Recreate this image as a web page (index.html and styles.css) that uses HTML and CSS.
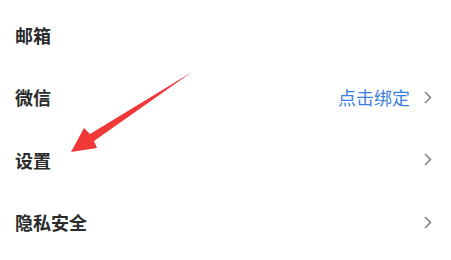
FILE: index.html
```html
<!DOCTYPE html>
<html lang="zh">
<head>
<meta charset="utf-8">
<link rel="stylesheet" href="styles.css">
</head>
<body>
<div class="page">
  <ul class="list">
    <li class="row"><span class="label">邮箱</span></li>
    <li class="row"><span class="label">微信</span><span class="right"><span class="action">点击绑定</span><svg class="chev" viewBox="0 0 8 13"><path d="M1 1 L6.5 6.5 L1 12" /></svg></span></li>
    <li class="row"><span class="label">设置</span><span class="right"><svg class="chev" viewBox="0 0 8 13"><path d="M1 1 L6.5 6.5 L1 12" /></svg></span></li>
    <li class="row"><span class="label">隐私安全</span><span class="right"><svg class="chev" viewBox="0 0 8 13"><path d="M1 1 L6.5 6.5 L1 12" /></svg></span></li>
  </ul>
  <svg class="arrow" viewBox="0 0 451 260" width="451" height="260">
    <polygon points="192,72 90,134 84,128 71,152 97,148 94,141" />
  </svg>
</div>
</body>
</html>
```
FILE: styles.css
```css
html, body {
  margin: 0;
  padding: 0;
  background: #ffffff;
}
.page {
  position: relative;
  width: 451px;
  height: 260px;
  overflow: hidden;
  font-family: "Noto Sans CJK SC", "Noto Sans", sans-serif;
}
.list {
  list-style: none;
  margin: 0;
  padding: 3.5px 19px 0 15px;
}
.row {
  height: 62.5px;
  display: flex;
  align-items: center;
  justify-content: space-between;
}
.label {
  font-size: 18px;
  font-weight: 700;
  color: #2b2b2b;
}
.right {
  display: flex;
  align-items: center;
  gap: 14px;
}
.action {
  font-size: 18px;
  color: #3c7fe0;
}
.chev {
  width: 8px;
  height: 13px;
  fill: none;
  stroke: #808080;
  stroke-width: 1.5;
}
.arrow {
  position: absolute;
  left: 0;
  top: 0;
  fill: #f03838;
}
```
